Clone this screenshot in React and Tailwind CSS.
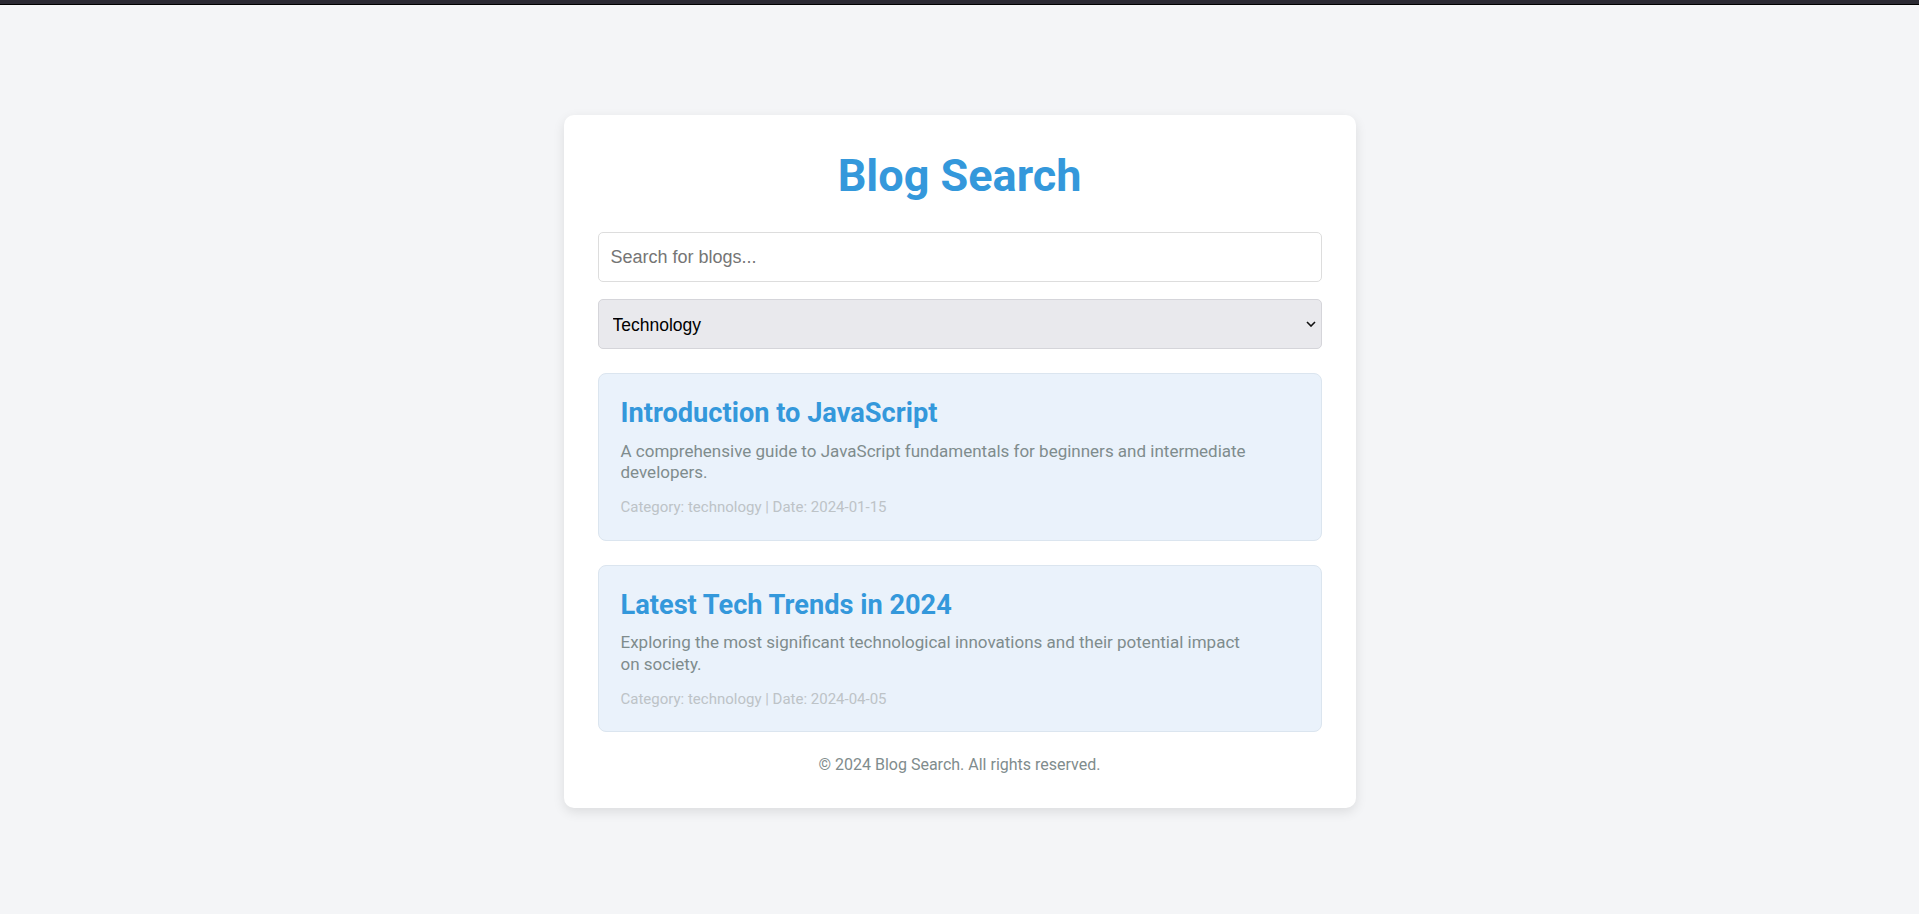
import React, { useState } from 'react';

// line breaks in the excerpts follow the reference rendering
const posts = [
    {
        id: 1,
        title: 'Introduction to JavaScript',
        excerpt: 'A comprehensive guide to JavaScript fundamentals for beginners and intermediate developers.',
        category: 'technology',
        date: '2024-01-15',
    },
    {
        id: 2,
        title: 'Latest Tech Trends in 2024',
        excerpt: 'Exploring the most significant technological innovations and their potential impact\non society.',
        category: 'technology',
        date: '2024-04-05',
    },
];

const App = () => {
    const [search, setSearch] = useState('');
    const [category, setCategory] = useState('technology');

    const filtered = posts.filter(p =>
        (category === 'all' || p.category === category) &&
        p.title.toLowerCase().includes(search.toLowerCase())
    );

    return (
        <div className="min-h-screen bg-[#f4f5f7] font-['Roboto',sans-serif]">
            <div className="h-[4px] bg-[#2b2a33]" />
            <div className="h-px bg-black" />
            <div className="pt-[110px] pb-10">
                <div className="mx-auto w-[792px] bg-white rounded-[10px] shadow-[0_4px_12px_rgba(0,0,0,0.1)] px-[34px] pt-[34px] pb-[31px]">
                    <h1 className="text-center text-[45px] leading-[1.2] font-bold text-[#3498db] mb-[29px]">Blog Search</h1>

                    <input
                        type="text"
                        value={search}
                        onChange={e => setSearch(e.target.value)}
                        placeholder="Search for blogs..."
                        className="block w-full h-[50px] px-3 border border-[#dddddd] rounded-[5px] bg-white text-[18px] font-['Liberation_Sans',sans-serif] text-black placeholder:text-[#757575] focus:outline-none"
                    />

                    <div className="relative mt-[17px]">
                        <select
                            value={category}
                            onChange={e => setCategory(e.target.value)}
                            className="block w-full h-[50px] pl-[14px] pr-8 pt-[3px] appearance-none border border-[#d5d5da] rounded-[5px] bg-[#e9e9ed] text-[17.5px] font-['Liberation_Sans',sans-serif] text-black focus:outline-none"
                        >
                            <option value="all">All Categories</option>
                            <option value="technology">Technology</option>
                            <option value="lifestyle">Lifestyle</option>
                            <option value="travel">Travel</option>
                        </select>
                        <svg className="absolute right-[6px] top-1/2 -translate-y-1/2 w-[10px] h-[6px] pointer-events-none" viewBox="0 0 10 6" fill="none">
                            <polyline points="1,1 5,5 9,1" stroke="#111" strokeWidth="1.6" />
                        </svg>
                    </div>

                    <div className="mt-6 flex flex-col gap-6">
                        {filtered.map(post => (
                            <div key={post.id} className="bg-[#eaf2fb] border border-[#dbe5ef] rounded-[8px] px-[22px] pt-[23px] pb-[21px]">
                                <h2 className="text-[27.2px] leading-[1.2] font-bold text-[#3498db]">{post.title}</h2>
                                <p className="mt-[11px] text-[17px] leading-[21.7px] text-[#7f8c8d] whitespace-pre-line">{post.excerpt}</p>
                                <p className="mt-[12px] text-[15px] text-[#bdc3c7]">
                                    Category: {post.category} | Date: {post.date}
                                </p>
                            </div>
                        ))}
                    </div>

                    <p className="mt-[21px] text-center text-[16px] text-[#7f8c8d]">© 2024 Blog Search. All rights reserved.</p>
                </div>
            </div>
        </div>
    );
};

export default App;
